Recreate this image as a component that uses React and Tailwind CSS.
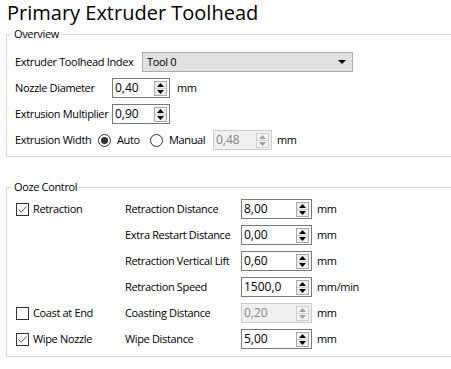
import { useState } from 'react';

const FONT = { fontFamily: '"Open Sans", "Noto Sans", sans-serif' };

// Qt style up/down arrows of a spin box
function SpinArrows({ disabled }) {
  const c = disabled ? '#a0a0a0' : '#000';
  return (
    <div className={`flex h-[15px] w-[13px] shrink-0 flex-col border ${disabled ? 'border-[#cfcfcf] bg-[#f4f4f4]' : 'border-[#a9a9a9] bg-[#f0f0f0]'}`}>
      <div className="flex flex-1 items-center justify-center border-b border-[#d0d0d0]">
        <svg width="7" height="4" viewBox="0 0 7 4"><path d="M0 4 L3.5 0 L7 4 Z" fill={c} /></svg>
      </div>
      <div className="flex flex-1 items-center justify-center">
        <svg width="7" height="4" viewBox="0 0 7 4"><path d="M0 0 L3.5 4 L7 0 Z" fill={c} /></svg>
      </div>
    </div>
  );
}

function SpinBox({ value, width = 'w-[58px]', disabled }) {
  return (
    <div
      className={`flex h-[20px] ${width} shrink-0 items-center justify-between border pl-[2px] pr-[2px] ${
        disabled ? 'border-[#cccccc] bg-[#f0f0f0] text-[#838383]' : 'border-[#7a7a7a] bg-white text-black'
      }`}
    >
      <span className="text-[12px] leading-none tracking-normal">{value}</span>
      <SpinArrows disabled={disabled} />
    </div>
  );
}

function CheckBox({ checked, label }) {
  return (
    <div className="flex items-center gap-[4px]">
      <div className="flex h-[13px] w-[13px] shrink-0 items-center justify-center border border-[#333333] bg-white">
        {checked && (
          <svg width="11" height="11" viewBox="0 0 11 11">
            <path d="M1.5 5.5 L4.2 8.3 L9.5 2.5" fill="none" stroke="#555" strokeWidth="1" />
          </svg>
        )}
      </div>
      <span>{label}</span>
    </div>
  );
}

function Radio({ checked, label, className = '' }) {
  return (
    <div className={`flex items-center gap-[6px] ${className}`}>
      <div className="flex h-[13px] w-[13px] shrink-0 items-center justify-center rounded-full border border-[#333333] bg-white">
        {checked && <div className="h-[7px] w-[7px] rounded-full bg-[#333333]" />}
      </div>
      <span>{label}</span>
    </div>
  );
}

function Group({ title, className, children }) {
  return (
    <div className={`relative ml-[6px] w-[470px] border border-[#dcdcdc] ${className}`}>
      <span className="absolute -top-[9px] left-[5px] bg-white px-[2px] leading-[16px]">{title}</span>
      {children}
    </div>
  );
}

const oozeRows = [
  { check: { checked: true, label: 'Retraction' }, label: 'Retraction Distance', value: '8,00', unit: 'mm' },
  { label: 'Extra Restart Distance', value: '0,00', unit: 'mm' },
  { label: 'Retraction Vertical Lift', value: '0,60', unit: 'mm' },
  { label: 'Retraction Speed', value: '1500,0', unit: 'mm/min' },
  { check: { checked: false, label: 'Coast at End' }, label: 'Coasting Distance', value: '0,20', unit: 'mm', disabled: true },
  { check: { checked: true, label: 'Wipe Nozzle' }, label: 'Wipe Distance', value: '5,00', unit: 'mm' },
];

export default function App() {
  const [tool] = useState('Tool 0');

  return (
    <div
      className="h-[369px] w-[451px] overflow-hidden whitespace-nowrap bg-white text-[11px] tracking-[-0.35px] text-black"
      style={FONT}
    >
      <div className="h-[34px] pl-[7px] text-[20px] leading-[26px] tracking-normal">Primary Extruder Toolhead</div>

      <Group title="Overview" className="pl-[8px] pt-[14px] pb-[3px]">
        <div className="flex h-[26px] items-center">
          <span className="w-[127px] shrink-0">Extruder Toolhead Index</span>
          <div className="flex h-[20px] w-[211px] items-center justify-between border border-[#adadad] bg-[#e1e1e1] pl-[4px] pr-[6px]">
            <span>{tool}</span>
            <svg width="8" height="4" viewBox="0 0 8 4"><path d="M0 0 L8 0 L4 4 Z" fill="#000" /></svg>
          </div>
        </div>
        <div className="flex h-[26px] items-center">
          <span className="w-[97px] shrink-0">Nozzle Diameter</span>
          <SpinBox value="0,40" />
          <span className="ml-[7px]">mm</span>
        </div>
        <div className="flex h-[26px] items-center">
          <span className="w-[97px] shrink-0">Extrusion Multiplier</span>
          <SpinBox value="0,90" />
        </div>
        <div className="flex h-[26px] items-center">
          <span className="w-[83px] shrink-0">Extrusion Width</span>
          <Radio checked label="Auto" className="w-[52px] shrink-0" />
          <Radio label="Manual" className="w-[63px] shrink-0" />
          <SpinBox value="0,48" width="w-[59px]" disabled />
          <span className="ml-[5px]">mm</span>
        </div>
      </Group>

      <Group title="Ooze Control" className="mt-[30px] pl-[9px] pt-[8px] pb-[4px]">
        {oozeRows.map((r) => (
          <div key={r.label} className="grid h-[26px] grid-cols-[109px_116px_71px_auto] items-center">
            <div>{r.check && <CheckBox {...r.check} />}</div>
            <span>{r.label}</span>
            <SpinBox value={r.value} width="w-[71px]" disabled={r.disabled} />
            <span className="ml-[5px]">{r.unit}</span>
          </div>
        ))}
      </Group>
    </div>
  );
}
